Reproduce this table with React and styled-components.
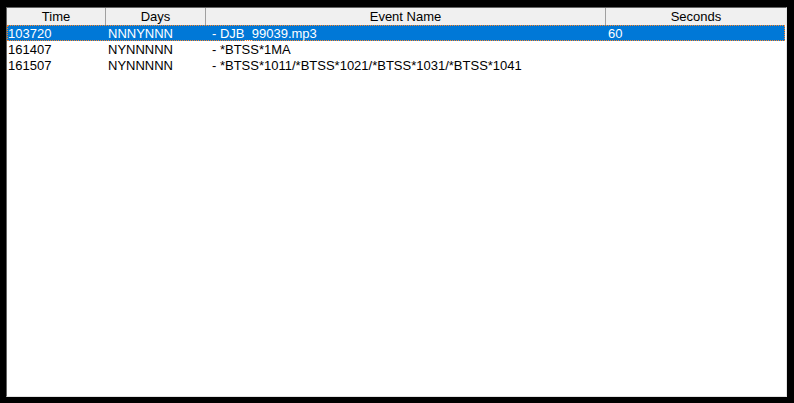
import React from 'react';
import styled, { createGlobalStyle } from 'styled-components';

const GlobalStyle = createGlobalStyle`
  html, body {
    margin: 0;
    padding: 0;
    background: #000000;
  }
  body {
    font-family: "Liberation Sans", Arial, sans-serif;
  }
`;

const columns = [
  { key: 'time', title: 'Time', width: '99px', pad: 1 },
  { key: 'days', title: 'Days', width: '100px', pad: 2 },
  { key: 'name', title: 'Event Name', width: '400px', pad: 6 },
  { key: 'seconds', title: 'Seconds', width: '1fr', pad: 2 },
];

const gridTemplate = columns.map((c) => c.width).join(' ');

const rows = [
  { time: '103720', days: 'NNNYNNN', name: '- DJB_99039.mp3', seconds: '60', selected: true },
  { time: '161407', days: 'NYNNNNN', name: '- *BTSS*1MA', seconds: '' },
  { time: '161507', days: 'NYNNNNN', name: '- *BTSS*1011/*BTSS*1021/*BTSS*1031/*BTSS*1041', seconds: '' },
];

const Page = styled.div`
  padding: 7px 0 0 6px;
`;

const ListView = styled.div`
  width: 781px;
  height: 390px;
  box-sizing: border-box;
  background: #ffffff;
  border-left: 1px solid #646464;
  border-top: 1px solid #646464;
  border-right: 1px solid #e3e3e3;
  border-bottom: 1px solid #e3e3e3;
  display: flex;
  flex-direction: column;
  font-size: 13px;
  color: #000000;
`;

const Header = styled.div`
  display: grid;
  grid-template-columns: ${gridTemplate};
  height: 17px;
  background: #f0f0f0;
`;

const HeaderCell = styled.div`
  text-align: center;
  padding-top: 1px;
  line-height: 16px;
  border-right: ${(p) => (p.$last ? 'none' : '1px solid #a0a0a0')};
  white-space: nowrap;
`;

const Body = styled.div`
  display: flex;
  flex-direction: column;
  padding-right: 1px;
`;

const Row = styled.div`
  display: grid;
  grid-template-columns: ${gridTemplate};
  height: 16px;
  background: ${(p) => (p.$selected ? '#0078d7' : 'transparent')};
  color: ${(p) => (p.$selected ? '#ffffff' : '#000000')};
  outline: ${(p) => (p.$selected ? '1px dotted #ff8728' : 'none')};
  outline-offset: -1px;
`;

const Cell = styled.div`
  padding-left: ${(p) => p.$pad}px;
  padding-top: 1px;
  line-height: 15px;
  white-space: nowrap;
  overflow: hidden;
`;

export default function App() {
  return (
    <>
      <GlobalStyle />
      <Page>
        <ListView>
          <Header>
            {columns.map((c, i) => (
              <HeaderCell key={c.key} $last={i === columns.length - 1}>
                {c.title}
              </HeaderCell>
            ))}
          </Header>
          <Body>
            {rows.map((r) => (
              <Row key={r.time} $selected={r.selected}>
                {columns.map((c) => (
                  <Cell key={c.key} $pad={c.pad}>
                    {r[c.key]}
                  </Cell>
                ))}
              </Row>
            ))}
          </Body>
        </ListView>
      </Page>
    </>
  );
}
